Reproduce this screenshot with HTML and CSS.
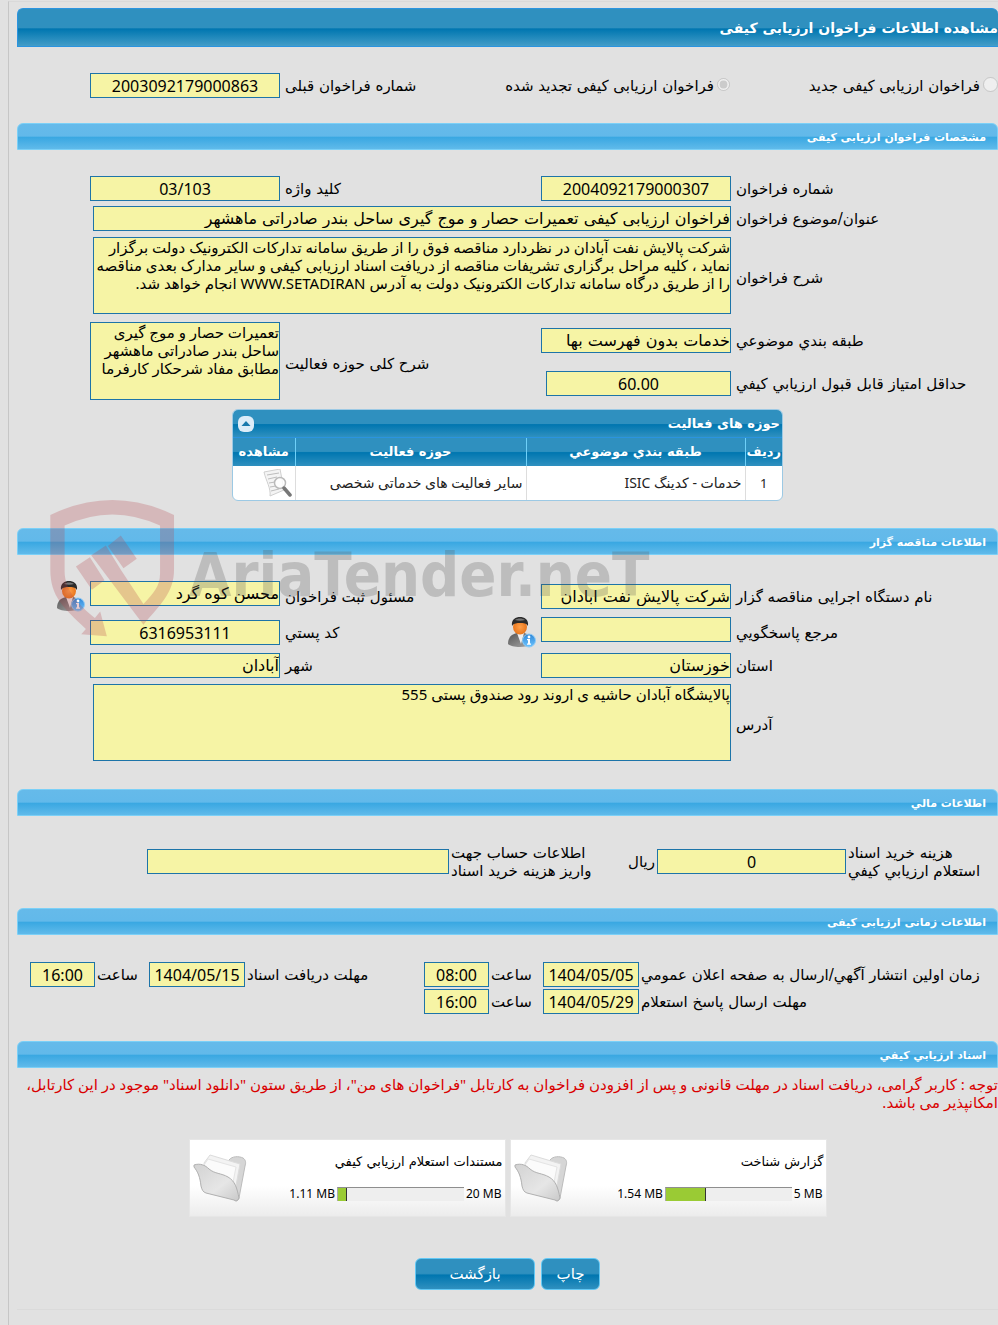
FILE: index.html
```html
<!DOCTYPE html>
<html lang="fa" dir="rtl">
<head>
<meta charset="utf-8">
<title>مشاهده اطلاعات فراخوان ارزیابی کیفی</title>
<link rel="stylesheet" href="styles.css">
</head>
<body>
<svg class="defs" aria-hidden="true">
  <defs>
    <linearGradient id="suit" x1="0" y1="0" x2="1" y2="1"><stop offset="0" stop-color="#555"/><stop offset="1" stop-color="#a9a9a9"/></linearGradient>
    <radialGradient id="face"><stop offset="0" stop-color="#ffa04a"/><stop offset="1" stop-color="#e9761c"/></radialGradient>
    <linearGradient id="info" x1="0" y1="0" x2="0" y2="1"><stop offset="0" stop-color="#2f86d6"/><stop offset="1" stop-color="#6cc4ff"/></linearGradient>
    <linearGradient id="flap" x1="0" y1="0" x2="1" y2="1"><stop offset="0" stop-color="#d2d2d2"/><stop offset=".6" stop-color="#e6e6e6"/><stop offset="1" stop-color="#c9c9c9"/></linearGradient>
    <symbol id="person" viewBox="0 0 28 31">
      <path d="M0 27C0 20 4 17 9 16l7 0c5 1 8 5 8 11-5 4-20 4-24 0z" fill="url(#suit)"/>
      <path d="M9 16l4 11 3-11z" fill="#eee"/>
      <ellipse cx="12" cy="10" rx="7" ry="7.500" fill="url(#face)"/>
      <path d="M4 9C3 2 8 0 12 0s9 2 8 9c-2-3-4-3-8-3-3 0-6 0-8 3z" fill="#2b2b2b"/>
      <path d="M7 3c3-2 7-2 10 0-3 1-7 1-10 0z" fill="#777"/>
      <circle cx="21" cy="23.500" r="6.500" fill="url(#info)" stroke="#8ecbf6"/>
      <circle cx="21" cy="20" r="1.400" fill="#fff"/>
      <path d="M19 22h3v4.500h1v1.300h-4v-1.300h1v-3.200h-1z" fill="#fff"/>
    </symbol>
    <symbol id="folder" viewBox="0 0 54 48">
      <path d="M36 6c3-4 10-4 14-2 3 2 3 5 2 8l-6 32c-1 3-3 4-5 2z" fill="#d6d6d6" stroke="#bcbcbc"/>
      <path d="M11 9l6-8 30 9-6 32-25-8z" fill="#f3f3f3" stroke="#dcdcdc"/>
      <path d="M11 11l4-6 28 8-5 26z" fill="#fbfbfb" stroke="#e4e4e4"/>
      <path d="M1 11c6-2 11 0 15 4 6 5 12 4 19 8 7 4 9 11 11 21-1 3-3 3-5 2L13 39c-3-1-4-3-5-7C7 23 5 18 1 13z" fill="url(#flap)" stroke="#b0b0b0"/>
    </symbol>
  </defs>
</svg>

<main class="panel">
  <h1 class="title-bar">مشاهده اطلاعات فراخوان ارزیابی کیفی</h1>
  <div class="form-grid body">
    <label class="radio radio-new"><input type="radio" name="kind" disabled>فراخوان ارزیابی کیفی جدید</label>
    <label class="radio radio-renew"><input type="radio" name="kind" checked disabled>فراخوان ارزیابی کیفی تجدید شده</label>
    <label class="lbl second" for="prev">شماره فراخوان قبلی</label>
    <input class="field num" id="prev" value="2003092179000863" readonly>
  </div>

  <section>
    <h2 class="section-bar">مشخصات فراخوان ارزیابی کیفی</h2>
    <div class="body">
      <div class="form-grid">
        <label class="lbl" for="no">شماره فراخوان</label>
        <input class="field num" id="no" value="2004092179000307" readonly>
        <label class="lbl" for="key">کلید واژه</label>
        <input class="field num" id="key" value="03/103" readonly>

        <label class="lbl first" for="subject">عنوان/موضوع فراخوان</label>
        <input class="field wide" id="subject" value="فراخوان ارزیابی کیفی تعمیرات حصار و موج گیری ساحل بندر صادراتی ماهشهر" readonly>

        <label class="lbl first drop" for="desc">شرح فراخوان</label>
        <textarea class="field area wide" id="desc" readonly>شرکت پالایش نفت آبادان در نظردارد مناقصه فوق را از طریق سامانه تدارکات الکترونیک دولت برگزار نماید ، کلیه مراحل برگزاری تشریفات مناقصه از دریافت اسناد ارزیابی کیفی و سایر مدارک بعدی مناقصه را از طریق درگاه سامانه تدارکات الکترونیک دولت به آدرس WWW.SETADIRAN انجام خواهد شد.</textarea>

        <label class="lbl first drop" for="cat">طبقه بندي موضوعي</label>
        <input class="field drop" id="cat" value="خدمات بدون فهرست بها" readonly>
        <label class="lbl tall tall-label" for="scope">شرح کلی حوزه فعالیت</label>
        <textarea class="field area tall" id="scope" readonly>تعمیرات حصار و موج گیری ساحل بندر صادراتی ماهشهر مطابق مفاد شرحکار کارفرما</textarea>
        <label class="lbl first drop" for="score">حداقل امتیاز قابل قبول ارزیابي کیفي</label>
        <input class="field num score drop" id="score" value="60.00" readonly>
      </div>

      <div class="grid-box">
        <div class="grid-title">
          <span>حوزه های فعالیت</span>
          <button class="collapse" type="button" aria-label="بستن">
            <svg viewBox="0 0 16 16"><path d="M3.500 10L8 5l4.500 5z" fill="#1879ad"/></svg>
          </button>
        </div>
        <table>
          <thead>
            <tr><th class="c-row">ردیف</th><th class="c-cat">طبقه بندي موضوعي</th><th class="c-area">حوزه فعالیت</th><th class="c-view">مشاهده</th></tr>
          </thead>
          <tbody>
            <tr>
              <td class="center">1</td><td>خدمات - کدینگ ISIC</td><td>سایر فعالیت های خدماتی شخصی</td>
              <td class="view"><a href="#" aria-label="مشاهده">
                <svg viewBox="0 0 30 28" fill="none">
                  <path d="M2 3L18 0l4 21-14 6c1-8-4-15-6-24z" fill="#f4f4f4" stroke="#cfcfcf"/>
                  <path d="M5 6l12-2M6 10l9-2M7 14l6-1M8 18l6-1M9 22l8-2" stroke="#bdbdbd"/>
                  <circle cx="18" cy="14" r="5.500" fill="#fff" fill-opacity=".8" stroke="#bababa" stroke-width="1.500"/>
                  <path d="M22 19l6 7" stroke="#777" stroke-width="3.500" stroke-linecap="round"/>
                </svg></a></td>
            </tr>
          </tbody>
        </table>
      </div>
    </div>
  </section>

  <section class="owner">
    <h2 class="section-bar">اطلاعات مناقصه گزار</h2>
    <div class="form-grid body">
      <label class="lbl" for="org">نام دستگاه اجرایی مناقصه گزار</label>
      <input class="field" id="org" value="شرکت پالایش نفت ابادان" readonly>
      <label class="lbl" for="agent">مسئول ثبت فراخوان</label>
      <input class="field up" id="agent" value="محسن کوه گرد" readonly>
      <button class="person" type="button" aria-label="اطلاعات مسئول"><svg><use href="#person"/></svg></button>

      <label class="lbl row2 first" for="ref">مرجع پاسخگویي</label>
      <input class="field up row2" id="ref" value="" readonly>
      <button class="person mid row2" type="button" aria-label="اطلاعات مرجع"><svg><use href="#person"/></svg></button>
      <label class="lbl row2 second" for="zip">کد پستي</label>
      <input class="field num row2" id="zip" value="6316953111" readonly>

      <label class="lbl first" for="prov">استان</label>
      <input class="field" id="prov" value="خوزستان" readonly>
      <label class="lbl" for="city">شهر</label>
      <input class="field" id="city" value="آبادان" readonly>

      <label class="lbl first drop" for="addr">آدرس</label>
      <textarea class="field area wide" id="addr" readonly>پالایشگاه آبادان حاشیه ی اروند رود صندوق پستی 555</textarea>
    </div>
    <div class="watermark" dir="ltr">
      <svg viewBox="150 30 374 412" fill="#b54149">
        <path fill-rule="evenodd" d="M150 75Q337-15 522 75V240C522 310 480 345 430 405L273 196 317 167 362 240 430 343C460 310 480 290 480 250V107Q337 40 193 107V245C193 300 235 345 284 385L300 365 320 440 243 434 257 418C190 355 150 320 150 240z"/>
        <path d="M227 230l42-28 44 69-38 29zM323 168l39-31 48 70-40 28z"/>
      </svg>
      <span>AriaTender.neT</span>
    </div>
  </section>

  <section>
    <h2 class="section-bar">اطلاعات مالي</h2>
    <div class="money-grid body">
      <label class="lbl" for="cost">هزینه خرید اسناد<br>استعلام ارزیابي کیفي</label>
      <input class="field num" id="cost" value="0" readonly>
      <span class="lbl">ریال</span>
      <label class="lbl" for="acc">اطلاعات حساب جهت<br>واریز هزینه خرید اسناد</label>
      <input class="field" id="acc" value="" readonly>
    </div>
  </section>

  <section>
    <h2 class="section-bar">اطلاعات زمانی ارزیابی کیفی</h2>
    <div class="time-grid body">
      <label class="lbl" for="d1">زمان اولین انتشار آگهي/ارسال به صفحه اعلان عمومي</label>
      <input class="field num" id="d1" value="1404/05/05" readonly>
      <label class="lbl" for="t1">ساعت</label>
      <input class="field num" id="t1" value="08:00" readonly>
      <label class="lbl" for="d2">مهلت دریافت اسناد</label>
      <input class="field num" id="d2" value="1404/05/15" readonly>
      <label class="lbl" for="t2">ساعت</label>
      <input class="field num" id="t2" value="16:00" readonly>
      <label class="lbl first" for="d3">مهلت ارسال پاسخ استعلام</label>
      <input class="field num" id="d3" value="1404/05/29" readonly>
      <label class="lbl" for="t3">ساعت</label>
      <input class="field num" id="t3" value="16:00" readonly>
    </div>
  </section>

  <section>
    <h2 class="section-bar">اسناد ارزیابي کیفي</h2>
    <p class="notice">توجه : کاربر گرامی، دریافت اسناد در مهلت قانونی و پس از افزودن فراخوان به کارتابل "فراخوان های من"، از طریق ستون "دانلود اسناد" موجود در این کارتابل، امکانپذیر می باشد.</p>
    <div class="cards">
      <article class="card">
        <div class="card-text">
          <span>گزارش شناخت</span>
          <div class="usage"><bdi>5 MB</bdi><div class="bar" role="progressbar" aria-valuenow="31"><div class="fill" style="width:32%"></div></div><bdi>1.54 MB</bdi></div>
        </div>
        <svg class="folder"><use href="#folder"/></svg>
      </article>
      <article class="card">
        <div class="card-text">
          <span>مستندات استعلام ارزیابي کیفي</span>
          <div class="usage"><bdi>20 MB</bdi><div class="bar" role="progressbar" aria-valuenow="6"><div class="fill" style="width:7%"></div></div><bdi>1.11 MB</bdi></div>
        </div>
        <svg class="folder"><use href="#folder"/></svg>
      </article>
    </div>
  </section>

  <div class="actions">
    <button class="btn" type="button">چاپ</button>
    <button class="btn back" type="button">بازگشت</button>
  </div>
</main>
</body>
</html>
```
FILE: styles.css
```css
* { box-sizing: border-box; }

body {
  margin: 0;
  padding: 1px 0 0 8px;
  background: #e1e1e1;
  color: #000;
  font: 15px/18px "DejaVu Sans", sans-serif;
  overflow-x: hidden;
}

input, textarea, button { font: inherit; color: inherit; margin: 0; }

.defs { position: absolute; width: 0; height: 0; }

.panel {
  border-top: 1px solid #d9d9d9;
  border-left: 1px solid #c6c6c6;
  padding: 6px 0 15px 8px;
}

.title-bar, .section-bar {
  margin: 0;
  display: flex;
  align-items: center;
  border-radius: 6px 6px 0 0;
  color: #fff;
  white-space: nowrap;
}

.title-bar {
  height: 39px;
  border: 1px solid #2a94e0;
  border-right: 0;
  background: linear-gradient(#2f90bf 0, #2f90bf 50%, #0076b0 54%, #439dc8 100%);
  font-size: 14px;
}

.section-bar {
  height: 27px;
  padding: 2px 11px 0 0;
  border: 1px solid #7bd0f7;
  background: linear-gradient(#65baea 0, #62b9ea 48%, #3aa8e2 54%, #60baea 100%);
  font-size: 11px;
}

.body { padding: 26px 0 27px; }
.title-bar + .body { padding-bottom: 25px; }

.form-grid {
  display: grid;
  grid-template-columns: 262fr 190px 251fr 190px 68px;
  gap: 5px;
  align-items: center;
}

.lbl { justify-self: end; white-space: nowrap; }
.first { grid-column: 1; }
.second { grid-column: 3; }

.radio { display: flex; gap: 3px; white-space: nowrap; }
.radio input { width: 15px; height: 15px; }
.radio-renew { grid-column: 2; padding-right: 1px; }

.field {
  width: 100%;
  height: 25px;
  padding: 0;
  border: 1px solid #1d74a8;
  border-radius: 0;
  background: #f6f4a5;
  font-size: 16px;
  outline: 0;
}
.num { text-align: center; direction: ltr; font-family: "Noto Sans", sans-serif; }
.wide { grid-column: 2 / span 3; width: calc(100% - 3px); }
.area {
  height: 78px;
  font: 15px/18px "Noto Sans", "DejaVu Sans", sans-serif;
  padding: 0;
  resize: none;
  overflow: hidden;
}
.area.wide { height: 77px; margin-top: 1px; }
.tall { grid-row: span 2; margin-top: 3px; }
.tall-label { margin-top: 8px; }
.drop { margin-top: 5px; }
.score { width: 185px; }
.up { align-self: start; }

.grid-box {
  width: 551px;
  max-width: 100%;
  margin: 9px auto 0;
  border: 1px solid #9cc9e4;
  border-radius: 6px;
  overflow: hidden;
  background: #fff;
}
.grid-title {
  height: 28px;
  padding: 0 2px 0 5px;
  display: flex;
  align-items: center;
  justify-content: space-between;
  color: #fff;
  font-weight: bold;
  font-size: 13px;
  background: linear-gradient(#2f90bf 0, #2f90bf 50%, #0076b0 54%, #2f90bf 100%);
  border-bottom: 1px solid #2a94e0;
}
.collapse {
  width: 16px;
  height: 16px;
  padding: 0;
  border: 0;
  border-radius: 6px;
  background: #dcecf8;
  display: flex;
}
.grid-box table { width: 100%; border-collapse: collapse; table-layout: fixed; }
.grid-box th {
  height: 28px;
  padding: 0;
  color: #fff;
  font-size: 13px;
  white-space: nowrap;
  background: linear-gradient(#2f90bf 0, #2f90bf 48%, #0076b0 52%, #2f90bf 100%);
  border-left: 1px solid #6fd0f8;
}
.grid-box td {
  height: 34px;
  padding: 0 3px;
  font-family: "Noto Sans", "DejaVu Sans", sans-serif;
  font-size: 14px;
  color: #222;
  white-space: nowrap;
  border-left: 1px solid #ddd;
}
.grid-box th:last-child, .grid-box td:last-child { border-left: 0; }
.c-row { width: 37px; }
.c-cat { width: 219px; }
.c-area { width: 231px; }
.grid-box .center { text-align: center; font-size: 13px; }
.view svg { width: 30px; height: 28px; display: block; }

.owner { position: relative; }
.owner .body { padding-bottom: 28px; }
.person { width: 28px; height: 31px; padding: 0; border: 0; background: none; }
.person svg { width: 28px; height: 31px; display: block; }
.row2 { grid-row: 2; }
.mid { grid-column: 3; }

.watermark {
  position: absolute;
  left: 33px;
  top: -28px;
  display: flex;
  gap: 14px;
  opacity: .25;
  pointer-events: none;
}
.watermark svg { width: 125px; height: 137px; }
.watermark span {
  font: bold 61px/150px "Liberation Sans Narrow", "DejaVu Sans Condensed", sans-serif;
  color: #555;
}

.money-grid {
  display: grid;
  grid-template-columns: 150fr 189px 27px 175fr 302px 128px;
  gap: 2px;
  align-items: center;
  grid-auto-rows: 39px;
}
.money-grid .lbl { text-align: left; }

.time-grid {
  display: grid;
  grid-template-columns: 357fr 96px 50px 65px 175fr 96px 50px 65px 11px;
  gap: 2px;
  padding-top: 27px;
  align-items: center;
}
.time-grid .first { grid-column: 1; }

.notice {
  margin: 7px 0 28px;
  color: #d90000;
  font-family: "Noto Sans", "DejaVu Sans", sans-serif;
}

.cards { display: flex; justify-content: center; gap: 4px; }
.card {
  width: 317px;
  height: 78px;
  padding: 0 2px 0 3px;
  display: flex;
  align-items: center;
  justify-content: space-between;
  border: 1px solid #e6e6e6;
  background: linear-gradient(#fff 60%, #ececec);
  font-size: 13px;
}
.card-text { display: flex; flex-direction: column; gap: 14px; }
.usage { display: flex; align-items: center; gap: 2px; font-size: 12px; font-family: "Noto Sans", sans-serif; padding-right: 1px; }
.bar { width: 127px; height: 14px; border-top: 1px solid #8e8e8e; border-left: 1px solid #aaa; background: #eee; direction: ltr; }
.fill { height: 100%; background: #9acb34; border-right: 1px solid #333; }
.folder { width: 54px; height: 48px; }

.actions {
  display: flex;
  justify-content: center;
  gap: 6px;
  margin-top: 41px;
  padding-bottom: 19px;
  border-bottom: 1px solid #dadada;
}
.btn {
  width: 59px;
  height: 32px;
  padding: 0;
  border: 1px solid #62c8f5;
  border-radius: 6px;
  color: #fff;
  background: linear-gradient(#2f90bf 0, #2f90bf 48%, #0076b0 54%, #2f90bf 100%);
}
.back { width: 120px; }
```
